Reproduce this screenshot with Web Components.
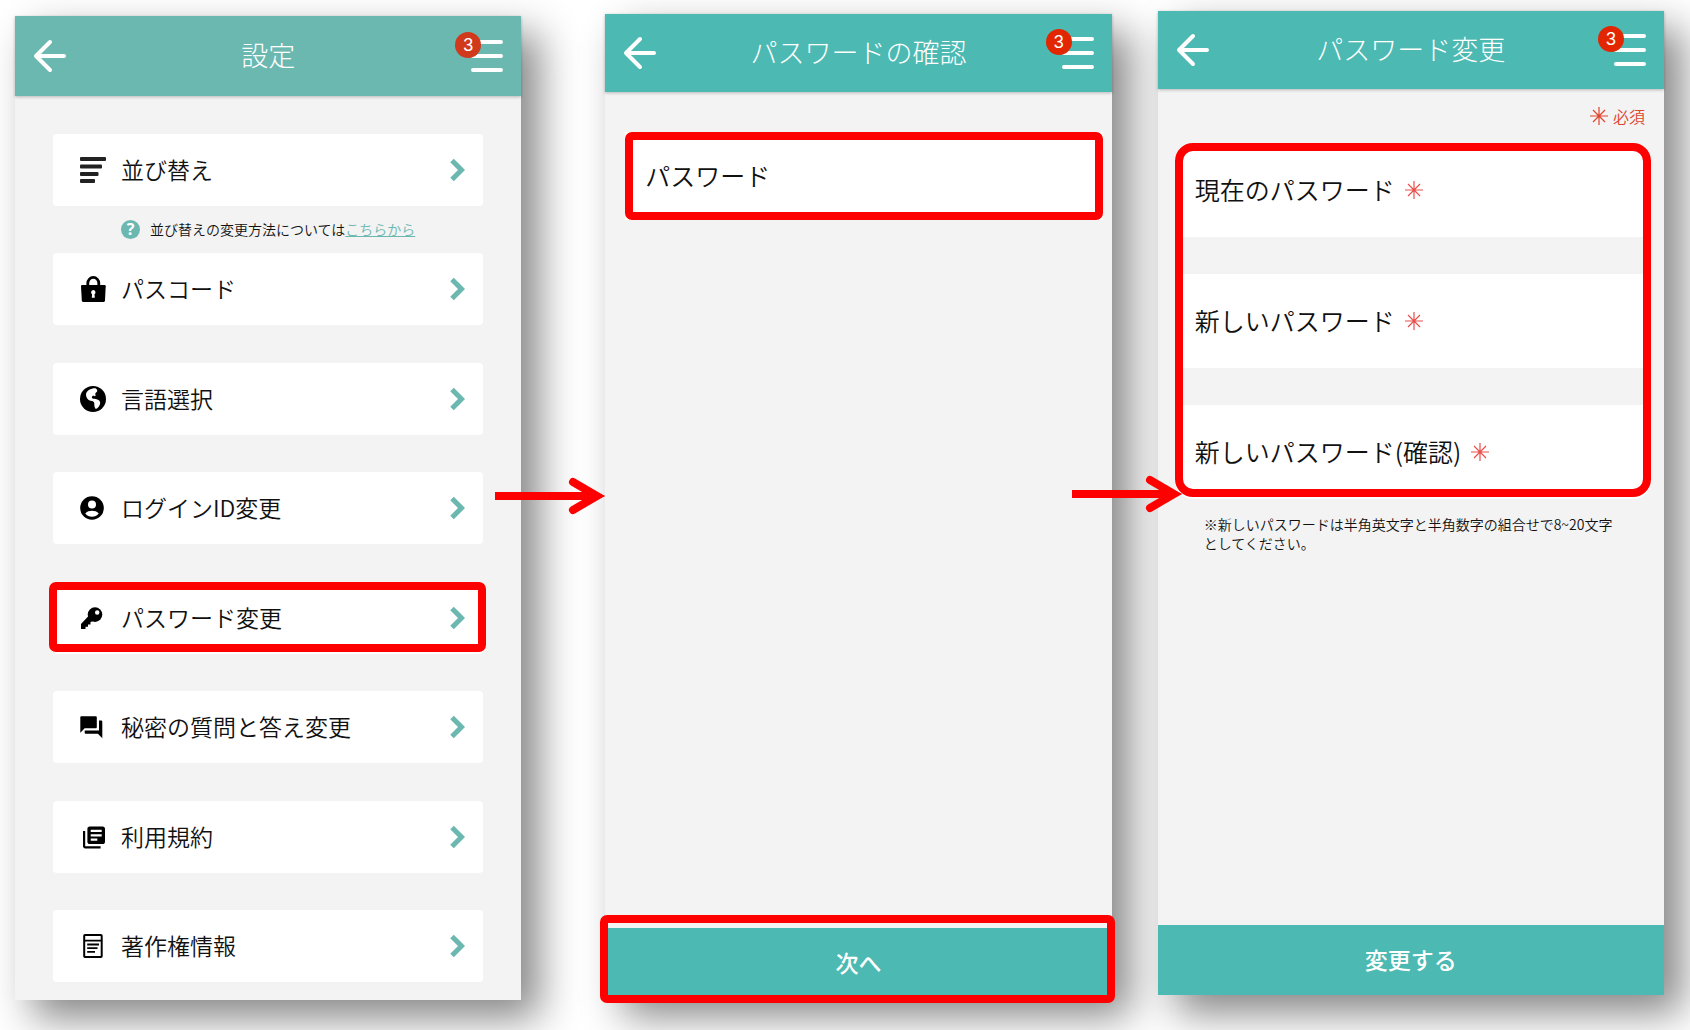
<!DOCTYPE html>
<html lang="ja">
<head>
<meta charset="utf-8">
<title>パスワード変更</title>
<style>
  body {
    margin: 0;
    background: #fff;
    color: #111;
    font-family: "Noto Sans CJK JP", sans-serif;
    font-weight: 350;
  }
</style>
</head>
<body>
<password-flow></password-flow>

<script>
const ICONS = {
  sort: `<g fill="#222"><rect x="1" y="1" width="26" height="4" rx="1"/><rect x="1" y="8.500" width="22" height="4" rx="1"/><rect x="1" y="16" width="18.500" height="4" rx="1"/><rect x="1" y="23" width="15" height="4" rx="1"/></g>`,
  lock: `<path d="M8.800 12V8.200a5.500 5.800 0 0 1 11 0V12" fill="none" stroke="#000" stroke-width="2.800"/><path d="M3 10h22.500q1.200 0 1.200 1.200L26 25.500Q25.800 27 24.500 27h-20Q3 27 2.800 25.500L2 11.200Q2 10 3 10z"/><path d="M14.300 15a2.300 2.300 0 0 1 1.200 4.200l.3 3.600h-3l.3-3.600A2.300 2.300 0 0 1 14.300 15z" fill="#fff"/>`,
  globe: `<circle cx="14" cy="14" r="13"/><path d="M16.500 3.300C11.500 3.300 7 5.800 7 9.600c0 3 1.800 5.600 4.500 6.200 2.200.4 3.800.8 3.800 2.600 0 1.600 0 3.600 1.400 5.600 2.200-.6 4.300-3.400 4.500-6 .1-2.400-2.200-3.300-4.400-4-1.800-.5-4-.2-4-1.600 0-1.500 1.600-2 2.700-1.300.8.500 1.300-.1 1-1-.4-1.200-.2-2 .9-2.800 1.300-1 1.200-2.700-.9-4z" fill="#fff"/>`,
  account: `<circle cx="13" cy="14" r="11.800"/><circle cx="13" cy="10.600" r="4" fill="#fff"/><path d="M6.300 19.500c1.300-2.200 4.600-2.800 6.700-2.800s5.400.6 6.700 2.800c-1.700 2.200-4 3.200-6.700 3.200s-5-1-6.700-3.200z" fill="#fff"/>`,
  key: `<circle cx="16" cy="10.600" r="7.300"/><path d="M9.500 12 2 20v5h4.500v-2.200H9v-2.300h2.500V18L16 16.500z"/><circle cx="18.200" cy="8.500" r="2.200" fill="#fff"/>`,
  forum: `<path transform="translate(-.9 1) scale(1.100)" d="M21 6h-2v9H6v2c0 .55.45 1 1 1h11l4 4V7c0-.55-.45-1-1-1zm-4 6V3c0-.55-.45-1-1-1H3c-.55 0-1 .45-1 1v14l4-4h10c.55 0 1-.45 1-1z"/>`,
  library: `<path transform="translate(1.800 1.300) scale(1.100)" d="M4 6H2v14c0 1.100.9 2 2 2h14v-2H4V6zm16-4H8c-1.100 0-2 .9-2 2v12c0 1.100.9 2 2 2h12c1.100 0 2-.9 2-2V4c0-1.100-.9-2-2-2zm-1 9H9V9h10v2zm-4 4H9v-2h6v2zm4-8H9V5h10v2z"/>`,
  document: `<g fill="none" stroke="#000" stroke-width="1.800"><rect x="5.200" y="3" width="17.500" height="22" rx=".8" stroke-width="2"/><path d="M5 8.700h18M8.200 12.500H20M8.200 16.200H18.500M8.200 19.900H16"/></g>`,
};

const ASTERISK = `<svg class="asterisk" width="18" height="18" viewBox="0 0 18 18" aria-hidden="true"><path d="M9 0v18M0 9h18M3 3l12 12M15 3 3 15" stroke="currentColor" stroke-width="1.200"/></svg>`;

class AppHeader extends HTMLElement {
  connectedCallback() {
    this.attachShadow({ mode: "open" }).innerHTML = `
    <style>
      :host {
        display: block;
        position: relative;
        background: var(--accent);
        color: #fff;
        box-shadow: 0 1px 3px rgba(0, 0, 0, .25);
      }
      header {
        display: grid;
        grid-template-columns: 1fr auto 1fr;
        align-items: center;
        height: var(--header-height, 78px);
        padding: 0 18px;
      }
      h1 {
        margin: 0;
        padding-bottom: 2px;
        font-size: 27px;
        font-weight: 300;
        line-height: 40px;
      }
      button {
        position: relative;
        display: block;
        padding: 0;
        border: 0;
        background: none;
        color: inherit;
        font: inherit;
        cursor: pointer;
      }
      svg { display: block; }
      .menu { justify-self: end; }
      .badge {
        position: absolute;
        left: -15px;
        top: -7px;
        width: 26px;
        height: 26px;
        border-radius: 50%;
        background: var(--badge, #e12600);
        font-family: "Liberation Sans", sans-serif;
        font-size: 18px;
        line-height: 26px;
        text-align: center;
      }
    </style>
    <header>
      <button type="button" aria-label="戻る">
        <svg width="33" height="34" viewBox="0 0 33 34"><path d="M17 3 3 17l14 14M4 17h27" fill="none" stroke="#fff" stroke-width="4" stroke-linecap="round" stroke-linejoin="round"/></svg>
      </button>
      <h1><slot></slot></h1>
      <button type="button" class="menu" aria-label="メニュー">
        <svg width="33" height="34" viewBox="0 0 33 34"><path d="M3 3h28M3 17h28M3 31h28" stroke="#fff" stroke-width="4" stroke-linecap="round"/></svg>
        <span class="badge">3</span>
      </button>
    </header>`;
  }
}

class PhoneScreen extends HTMLElement {
  connectedCallback() {
    this.attachShadow({ mode: "open" }).innerHTML = `
    <style>
      :host {
        --accent: #4cb9b3;
        display: flex;
        flex-direction: column;
        height: calc(100vh - 46px);
        background: #f3f3f3;
        box-shadow: 18px 18px 38px rgba(0, 0, 0, .48);
      }
      main {
        flex: 1;
        display: flex;
        flex-direction: column;
      }
    </style>
    <app-header>${this.getAttribute("heading")}</app-header>
    <main><slot></slot></main>
    <slot name="footer"></slot>`;
  }
}

/* Red outline drawn over whatever it wraps. */
class HighlightFrame extends HTMLElement {
  connectedCallback() {
    this.attachShadow({ mode: "open" }).innerHTML = `
    <style>
      :host {
        display: block;
        position: relative;
      }
      :host::after {
        content: "";
        position: absolute;
        inset: var(--frame-inset, 0);
        border: 8px solid #f00;
        border-radius: var(--frame-radius, 7px);
        pointer-events: none;
      }
    </style>
    <slot></slot>`;
  }
}

class SettingItem extends HTMLElement {
  connectedCallback() {
    this.attachShadow({ mode: "open" }).innerHTML = `
    <style>
      :host { display: block; }
      a {
        display: flex;
        align-items: center;
        gap: 14px;
        height: 72px;
        padding: 0 18px 0 26px;
        border-radius: 4px;
        background: #fff;
        color: inherit;
        font-size: 23px;
        line-height: 32px;
        text-decoration: none;
      }
      svg { flex: none; }
      span { flex: 1; padding-bottom: 2px; }
    </style>
    <a href="#">
      <svg width="28" height="28" viewBox="0 0 28 28" aria-hidden="true">${ICONS[this.getAttribute("icon")]}</svg>
      <span><slot></slot></span>
      <svg width="16" height="24" viewBox="0 0 16 24" aria-hidden="true"><path d="m3 2.500 9.500 9.500L3 21.500" fill="none" stroke="#6bb8b1" stroke-width="5"/></svg>
    </a>`;
  }
}

class HelpNote extends HTMLElement {
  connectedCallback() {
    this.attachShadow({ mode: "open" }).innerHTML = `
    <style>
      :host {
        display: flex;
        align-items: center;
        gap: 10px;
        height: 47px;
        padding-left: 68px;
        font-size: 14px;
      }
      i {
        width: 19px;
        height: 19px;
        border-radius: 50%;
        background: var(--accent);
        color: #fff;
        font: bold 16px/19px "Noto Sans", sans-serif;
        text-align: center;
      }
      span { padding-bottom: 2px; }
      ::slotted(a) { color: var(--accent); }
    </style>
    <i>?</i><span><slot></slot></span>`;
  }
}

class PasswordField extends HTMLElement {
  connectedCallback() {
    const mark = this.hasAttribute("required") ? ASTERISK : "";
    this.attachShadow({ mode: "open" }).innerHTML = `
    <style>
      :host { display: block; background: #fff; }
      div {
        display: flex;
        align-items: center;
        height: var(--field-height, 94px);
        padding: 0 20px;
      }
      label {
        display: flex;
        align-items: center;
        gap: 10px;
        font-size: 25px;
        line-height: 36px;
        white-space: nowrap;
      }
      span { padding-bottom: 2px; }
      .asterisk { color: #e8504c; }
      input {
        flex: 1;
        min-width: 0;
        height: 100%;
        border: 0;
        outline: 0;
        background: none;
        font: inherit;
      }
    </style>
    <div><label for="field"><span>${this.getAttribute("label")}</span>${mark}</label><input id="field" type="password"></div>`;
  }
}

class SubmitButton extends HTMLElement {
  connectedCallback() {
    this.attachShadow({ mode: "open" }).innerHTML = `
    <style>
      :host { display: block; }
      button {
        display: block;
        width: 100%;
        height: 70px;
        padding: 0 0 3px;
        border: 0;
        background: var(--accent);
        color: #fff;
        font: inherit;
        font-size: 23px;
        font-weight: 500;
        cursor: pointer;
      }
    </style>
    <button type="button"><slot></slot></button>`;
  }
}

class FlowArrow extends HTMLElement {
  connectedCallback() {
    this.attachShadow({ mode: "open" }).innerHTML = `
    <style>
      :host {
        position: relative;
        z-index: 1;
      }
      svg {
        position: absolute;
        right: var(--arrow-right, 0);
        top: var(--arrow-top, 466px);
      }
    </style>
    <svg width="110" height="38" viewBox="0 0 110 38" aria-hidden="true">
      <path d="M0 19h98" stroke="#f00" stroke-width="8"/>
      <path d="M78 5l24 14-24 14" fill="none" stroke="#f00" stroke-width="8" stroke-linecap="round"/>
      <path d="M88 10l22 9-22 9z" fill="#f00"/>
    </svg>`;
  }
}

class PasswordFlow extends HTMLElement {
  connectedCallback() {
    this.attachShadow({ mode: "open" }).innerHTML = `
    <style>
      :host {
        display: grid;
        grid-template-columns: minmax(0, 1fr) 84px minmax(0, 1fr) 46px minmax(0, 1fr);
        align-items: start;
        box-sizing: border-box;
        min-height: 100vh;
        padding: 11px 26px 0 15px;
      }
      .settings {
        --accent: #6bb8b1;
        --badge: #d0391c;
        --header-height: 80px;
        margin-top: 5px;
      }
      .confirm { margin-top: 3px; }
      .first { padding: 38px 38px 0; }
      .list {
        flex: 1;
        display: flex;
        flex-direction: column;
        justify-content: space-between;
        padding: 0 38px 18px;
      }
      .list highlight-frame { --frame-inset: 0 -3px 2px -4px; }
      .confirm .box {
        margin: 40px 9px 0 20px;
        --field-height: 88px;
      }
      .confirm .next { --frame-inset: -13px -3px -5px -5px; }
      .legend {
        display: flex;
        align-items: center;
        justify-content: flex-end;
        gap: 5px;
        height: 54px;
        padding-right: 19px;
        color: #e0452c;
        font-size: 16px;
      }
      .fields {
        display: flex;
        flex-direction: column;
        gap: 37px;
        margin: 0 13px 0 17px;
        --frame-inset: 0 0 2px;
        --frame-radius: 18px;
      }
      .fields password-field:first-child { border-radius: 18px 18px 0 0; }
      .fields password-field:last-child { border-radius: 0 0 18px 18px; }
      .note {
        margin: 16px 44px 0 46px;
        font-size: 14px;
        line-height: 19px;
      }
      .second {
        --arrow-right: -24px;
        --arrow-top: 464px;
      }
    </style>
    <phone-screen class="settings" heading="設定">
      <div class="first">
        <setting-item icon="sort">並び替え</setting-item>
        <help-note>並び替えの変更方法については<a href="#">こちらから</a></help-note>
      </div>
      <div class="list">
        <setting-item icon="lock">パスコード</setting-item>
        <setting-item icon="globe">言語選択</setting-item>
        <setting-item icon="account">ログインID変更</setting-item>
        <highlight-frame><setting-item icon="key">パスワード変更</setting-item></highlight-frame>
        <setting-item icon="forum">秘密の質問と答え変更</setting-item>
        <setting-item icon="library">利用規約</setting-item>
        <setting-item icon="document">著作権情報</setting-item>
      </div>
    </phone-screen>
    <flow-arrow></flow-arrow>
    <phone-screen class="confirm" heading="パスワードの確認">
      <highlight-frame class="box"><password-field label="パスワード"></password-field></highlight-frame>
      <highlight-frame class="next" slot="footer"><submit-button>次へ</submit-button></highlight-frame>
    </phone-screen>
    <flow-arrow class="second"></flow-arrow>
    <phone-screen class="change" heading="パスワード変更">
      <div class="legend">${ASTERISK}<span>必須</span></div>
      <highlight-frame class="fields">
        <password-field label="現在のパスワード" required></password-field>
        <password-field label="新しいパスワード" required></password-field>
        <password-field label="新しいパスワード(確認)" required></password-field>
      </highlight-frame>
      <p class="note">※新しいパスワードは半角英文字と半角数字の組合せで8~20文字としてください。</p>
      <submit-button slot="footer">変更する</submit-button>
    </phone-screen>`;
  }
}

customElements.define("app-header", AppHeader);
customElements.define("phone-screen", PhoneScreen);
customElements.define("highlight-frame", HighlightFrame);
customElements.define("setting-item", SettingItem);
customElements.define("help-note", HelpNote);
customElements.define("password-field", PasswordField);
customElements.define("submit-button", SubmitButton);
customElements.define("flow-arrow", FlowArrow);
customElements.define("password-flow", PasswordFlow);
</script>
</body>
</html>
